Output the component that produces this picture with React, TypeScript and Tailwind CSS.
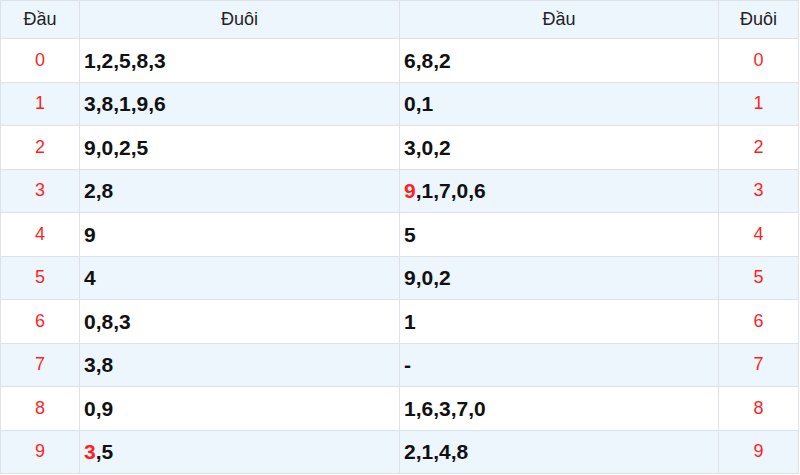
import React from "react";

const rows: { dau: string; duoi: string; hl1?: boolean; hl2?: boolean }[] = [
  { dau: "1,2,5,8,3", duoi: "6,8,2" },
  { dau: "3,8,1,9,6", duoi: "0,1" },
  { dau: "9,0,2,5", duoi: "3,0,2" },
  { dau: "2,8", duoi: "9,1,7,0,6", hl2: true },
  { dau: "9", duoi: "5" },
  { dau: "4", duoi: "9,0,2" },
  { dau: "0,8,3", duoi: "1" },
  { dau: "3,8", duoi: "-" },
  { dau: "0,9", duoi: "1,6,3,7,0" },
  { dau: "3,5", duoi: "2,1,4,8", hl1: true },
];

function Nums({ text, hl }: { text: string; hl?: boolean }) {
  if (!hl) return <>{text}</>;
  const first = text[0];
  return (
    <>
      <span className="text-[#ff1f1f]">{first}</span>
      {text.slice(1)}
    </>
  );
}

export default function App() {
  return (
    <div className="w-[800px] h-[475px] bg-white overflow-hidden" style={{ fontFamily: "'Liberation Sans', Arial, sans-serif" }}>
      <table className="w-[798px] border-collapse table-fixed border border-[#dee2e6]">
        <colgroup>
          <col className="w-[79px]" />
          <col className="w-[320px]" />
          <col className="w-[319px]" />
          <col className="w-[80px]" />
        </colgroup>
        <thead>
          <tr className="h-[38px] bg-[#edf5fd]">
            <th className="border border-[#dee2e6] font-normal text-[18px] text-[#222] text-center">Đầu</th>
            <th className="border border-[#dee2e6] font-normal text-[18px] text-[#222] text-center">Đuôi</th>
            <th className="border border-[#dee2e6] font-normal text-[18px] text-[#222] text-center">Đầu</th>
            <th className="border border-[#dee2e6] font-normal text-[18px] text-[#222] text-center">Đuôi</th>
          </tr>
        </thead>
        <tbody>
          {rows.map((r, i) => (
            <tr key={i} className={"h-[43.5px] " + (i % 2 === 1 ? "bg-[#edf5fd]" : "bg-white")}>
              <td className="border border-[#dee2e6] text-center text-[18px] text-[#ff1f1f]">{i}</td>
              <td className="border border-[#dee2e6] pl-[4px] text-[21px] font-bold text-[#111]">
                <Nums text={r.dau} hl={r.hl1} />
              </td>
              <td className="border border-[#dee2e6] pl-[4px] text-[21px] font-bold text-[#111]">
                <Nums text={r.duoi} hl={r.hl2} />
              </td>
              <td className="border border-[#dee2e6] text-center text-[18px] text-[#ff1f1f]">{i}</td>
            </tr>
          ))}
        </tbody>
      </table>
    </div>
  );
}
